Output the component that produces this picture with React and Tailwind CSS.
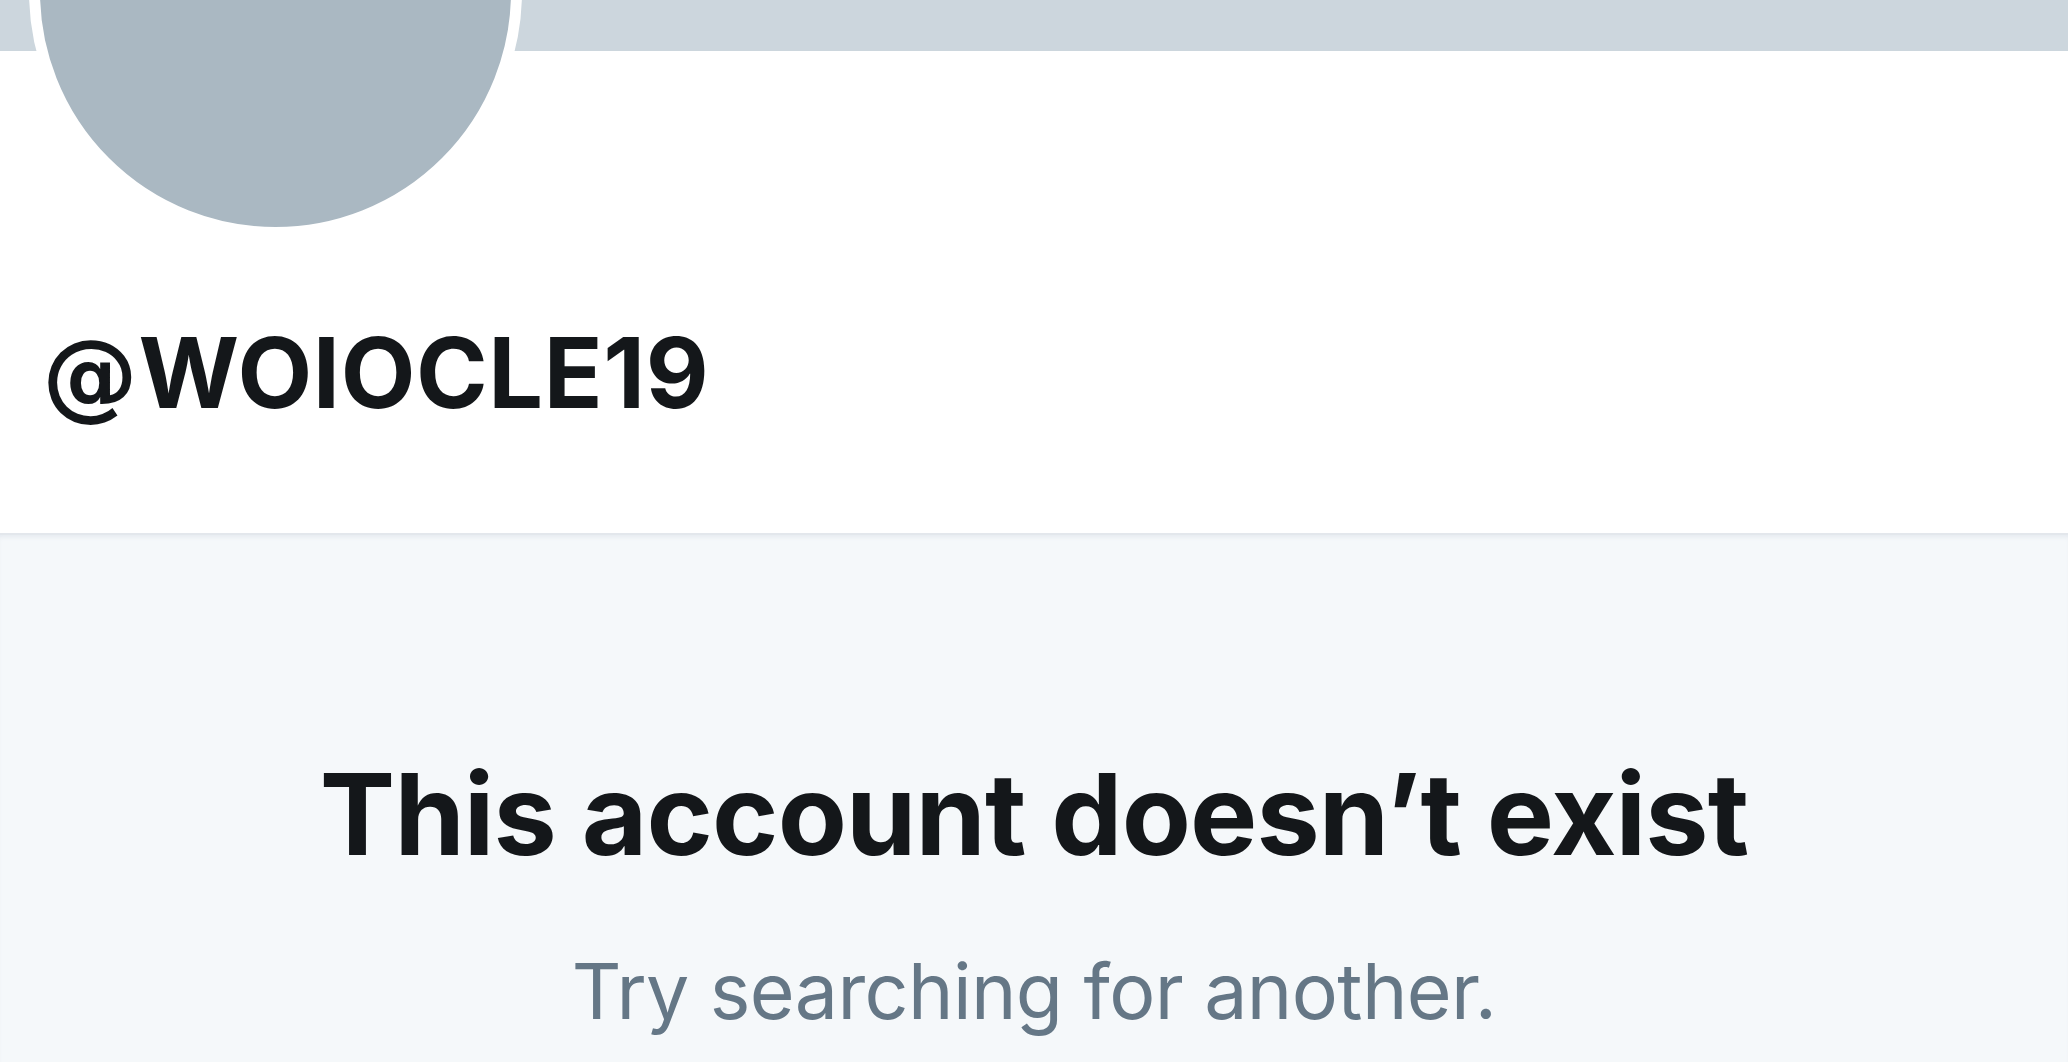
import React from "react";

export default function App() {
  return (
    <div className="min-h-screen bg-white font-['Inter','Liberation_Sans',Arial,sans-serif] overflow-hidden">
      {/* banner */}
      <div className="h-[51px] bg-[#ccd6dd]" />

      {/* profile header */}
      <div className="relative h-[482px] bg-white">
        <div className="absolute left-[29px] -top-[306px] w-[493px] h-[493px] rounded-full bg-[#aab8c2] border-[11px] border-white" />
        <div className="pt-[273px] pl-[42px]">
          <h2 className="text-[97px] leading-none font-bold text-[#14171a] tracking-[0.6px]">
            <span className="font-['DejaVu_Sans',sans-serif] text-[96px]">@</span>WOIOCLE19
          </h2>
        </div>
      </div>

      {/* empty state */}
      <div className="border-t-2 border-[#e3e7ec] bg-[#f5f8fa] min-h-[529px] shadow-[inset_0_4px_4px_-2px_rgba(200,205,220,0.35)]">
        <div className="flex flex-col items-center pt-[223px]">
          <h1 className="text-[113px] leading-none font-bold text-[#14171a] tracking-[-0.9px]">This account doesn’t exist</h1>
          <p className="mt-[82px] text-[77px] leading-none text-[#657786] tracking-[-0.6px]">Try searching for another.</p>
        </div>
      </div>
    </div>
  );
}
